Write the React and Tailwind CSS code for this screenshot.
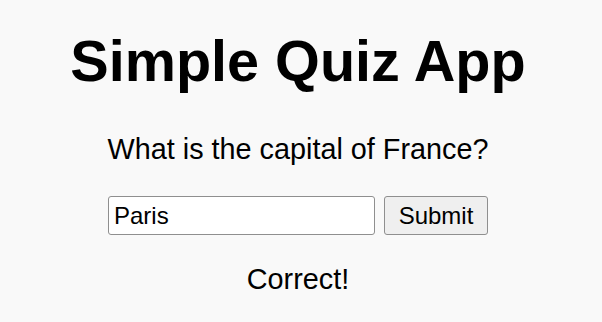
export default function App() {
  return (
    <div className="w-[602px] min-h-[322px] bg-[#f9f9f9] text-black" style={{ fontFamily: '"Liberation Sans", Arial, sans-serif' }}>
      <div className="w-[596px] flex flex-col items-center pt-[29px]">
        <h1 className="text-[57.6px] leading-[64px] font-bold">Simple Quiz App</h1>
        <p className="mt-[40px] text-[28.8px] leading-[32px]">What is the capital of France?</p>
        <div className="mt-[31px] flex items-center gap-[9px]">
          <input
            defaultValue="Paris"
            className="w-[267px] h-[39px] border border-[#8f8f8f] rounded-[3px] bg-white px-[5px] text-[24px] leading-[28px] text-black outline-none"
            style={{ fontFamily: '"Liberation Sans", Arial, sans-serif' }}
          />
          <button
            className="w-[104px] h-[39px] border border-[#8f8f8f] rounded-[3px] bg-[#efefef] text-[24px] leading-[28px] text-black"
            style={{ fontFamily: '"Liberation Sans", Arial, sans-serif' }}
          >
            Submit
          </button>
        </div>
        <p className="mt-[28px] text-[28.8px] leading-[32px]">Correct!</p>
      </div>
    </div>
  );
}
